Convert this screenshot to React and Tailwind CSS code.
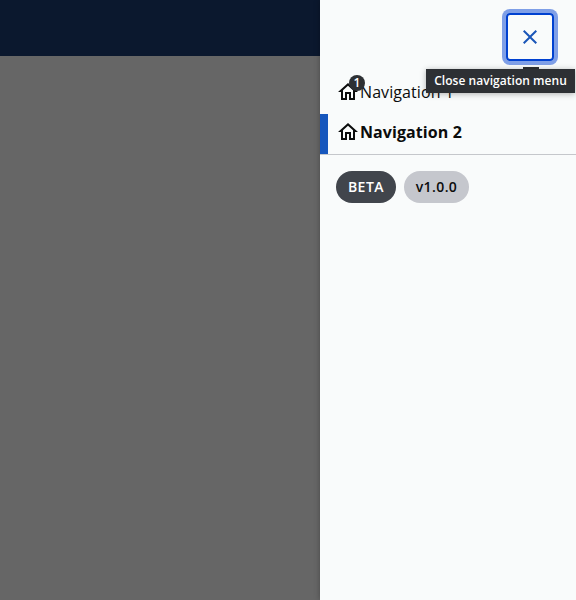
function HomeIcon() {
  return (
    <svg viewBox="0 0 24 24" className="size-6 shrink-0 fill-[#0b0c0c]" aria-hidden="true">
      <path d="M12 5.69l5 4.5V18h-2v-6H9v6H7v-7.81l5-4.5M12 3L2 12h3v8h6v-6h2v6h6v-8h3L12 3z" />
    </svg>
  );
}

function CloseIcon() {
  return (
    <svg viewBox="0 0 24 24" className="size-6 fill-[#1a56b8]" aria-hidden="true">
      <path d="M19 6.41L17.59 5 12 10.59 6.41 5 5 6.41 10.59 12 5 17.59 6.41 19 12 13.41 17.59 19 19 17.59 13.41 12z" />
    </svg>
  );
}

function NavItem({ label, badge, selected }) {
  return (
    <a
      className={
        selected
          ? "flex h-10 items-center border-l-8 border-[#1757bd] pb-1 pl-2 font-bold tracking-[0.08px]"
          : "flex h-10 items-center pb-1 pl-4 tracking-[0.08px]"
      }
    >
      <span className="relative flex">
        <HomeIcon />
        {badge && (
          <span className="absolute -top-[5px] left-[13px] flex size-4 items-center justify-center rounded-full bg-[#2d3034] text-xs font-semibold leading-4 text-white">
            {badge}
          </span>
        )}
      </span>
      <span>{label}</span>
    </a>
  );
}

export default function App() {
  return (
    <div className="flex h-[600px] w-[576px] overflow-hidden font-['Open_Sans',sans-serif] text-base text-[#0b0c0c]">
      <div className="flex flex-1 flex-col bg-[#666666]">
        <div className="h-14 bg-[#0b182e]" />
      </div>
      <aside className="w-64 bg-[#f9fbfb] shadow-[0_0_6px_rgba(0,0,0,0.3)]">
        <div className="flex h-[74px] justify-end pr-[22px] pt-[13px]">
          <div className="relative size-12">
            <button
              aria-label="Close navigation menu"
              className="flex size-12 items-center justify-center rounded-[4px] border-2 border-[#0041d0] ring-4 ring-[#7f9fe7]"
            >
              <CloseIcon />
            </button>
            <div className="absolute left-[17px] top-[54px] h-1 w-4 bg-[#2d3034]" />
            <div
              role="tooltip"
              className="absolute -right-[21px] top-14 z-10 flex h-6 w-[149px] items-center justify-center whitespace-nowrap bg-[#2d3034] text-xs font-semibold tracking-[0.04px] text-white shadow-[0_1px_6px_rgba(0,0,0,0.3)]"
            >
              Close navigation menu
            </div>
          </div>
        </div>
        <nav className="h-[81px] border-b border-[#c5c7cb]">
          <NavItem label="Navigation 1" badge="1" />
          <NavItem label="Navigation 2" selected />
        </nav>
        <div className="flex gap-2 px-4 pt-4 text-sm font-semibold">
          <span className="flex h-8 w-[60px] items-center justify-center rounded-full bg-[#41454c] tracking-[0.5px] text-white">
            BETA
          </span>
          <span className="flex h-8 w-[65px] items-center justify-center rounded-full bg-[#c5c7cd] tracking-[0.4px]">
            v1.0.0
          </span>
        </div>
      </aside>
    </div>
  );
}
